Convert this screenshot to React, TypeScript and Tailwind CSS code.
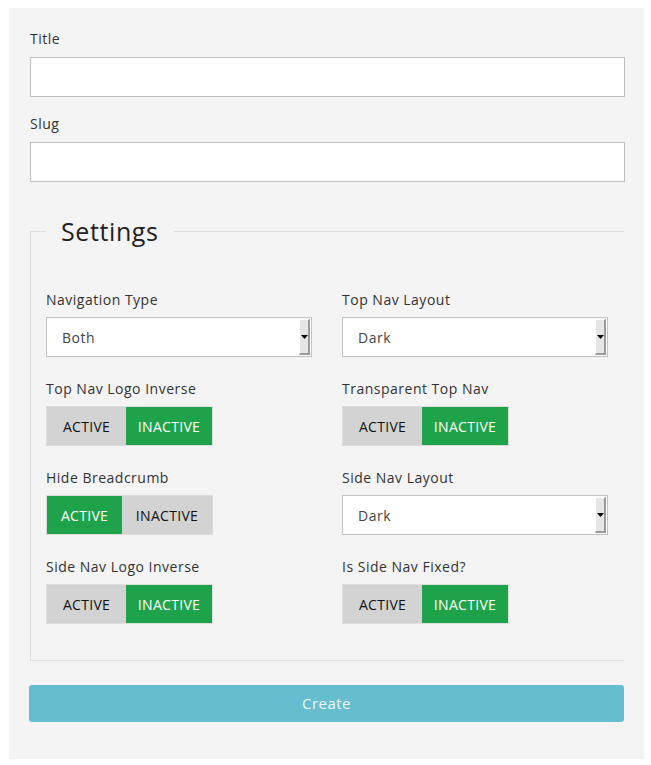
import { useState } from "react";

type ToggleProps = { value: boolean; onChange: (v: boolean) => void };

function Toggle({ value, onChange }: ToggleProps) {
  // selected side is green, the other one stays gray
  return (
    <div className="flex h-[40px] w-[167px] border border-[#dcdcdc] text-[14px]">
      <button
        type="button"
        onClick={() => onChange(true)}
        className={`flex items-center justify-center uppercase tracking-[0.3px] ${
          value ? "w-[75px] bg-[#1fa34a] text-white" : "w-[79px] bg-[#d3d3d3] text-[#111]"
        }`}
      >
        Active
      </button>
      <button
        type="button"
        onClick={() => onChange(false)}
        className={`flex flex-1 items-center justify-center uppercase tracking-[0.3px] ${
          !value ? "bg-[#1fa34a] text-white" : "bg-[#d3d3d3] text-[#111]"
        }`}
      >
        Inactive
      </button>
    </div>
  );
}

function FakeSelect({ value }: { value: string }) {
  return (
    <div className="flex h-[40px] w-[266px] items-stretch border border-[#c2c2c2] bg-white">
      <span className="flex flex-1 items-center pl-[15px] text-[14px] text-[#444]">{value}</span>
      <span className="my-[1px] mr-[1px] flex w-[11px] items-center justify-center border-l border-t border-l-white border-t-white border-r-2 border-b-2 border-r-[#9a9a9a] border-b-[#9a9a9a] bg-[#e6e6e6]">
        <svg width="7" height="4" viewBox="0 0 7 4">
          <path d="M0 0 L7 0 L3.5 4 Z" fill="#000" />
        </svg>
      </span>
    </div>
  );
}

function Field({ label, children }: { label: string; children: React.ReactNode }) {
  return (
    <div>
      <div className="mb-[7px] text-[14px] leading-[21px] text-[#333]">{label}</div>
      {children}
    </div>
  );
}

export default function App() {
  const [logoInverse, setLogoInverse] = useState(false);
  const [transparent, setTransparent] = useState(false);
  const [hideCrumb, setHideCrumb] = useState(true);
  const [sideLogo, setSideLogo] = useState(false);
  const [sideFixed, setSideFixed] = useState(false);

  return (
    <div className="min-h-screen bg-white pl-[9px] pt-[8px] font-['Open_Sans',sans-serif] tracking-[0.5px]">
      <div className="w-[635px] bg-[#f4f4f4] pl-[21px] pr-[19px] pt-[20px] pb-[37px]">
        <label className="block text-[14px] leading-[21px] text-[#333]">Title</label>
        <input className="mt-[8px] block h-[40px] w-full border border-[#bdbdbd] bg-white px-3 outline-none" />

        <label className="mt-[16px] block text-[14px] leading-[21px] text-[#333]">Slug</label>
        <input className="mt-[8px] block h-[40px] w-full border border-[#bdbdbd] bg-white px-3 outline-none" />

        <fieldset className="mt-[32px] w-[594px] border-l border-t border-b border-[#dedede] pl-[15px] pb-[36px]">
          <legend className="px-[15px] text-[25px] leading-[34px] tracking-[0.6px] text-[#222]">Settings</legend>

          <div className="mt-[41px] grid grid-cols-[266px_266px] gap-x-[30px] gap-y-[21px]">
            <Field label="Navigation Type">
              <FakeSelect value="Both" />
            </Field>
            <Field label="Top Nav Layout">
              <FakeSelect value="Dark" />
            </Field>
            <Field label="Top Nav Logo Inverse">
              <Toggle value={logoInverse} onChange={setLogoInverse} />
            </Field>
            <Field label="Transparent Top Nav">
              <Toggle value={transparent} onChange={setTransparent} />
            </Field>
            <Field label="Hide Breadcrumb">
              <Toggle value={hideCrumb} onChange={setHideCrumb} />
            </Field>
            <Field label="Side Nav Layout">
              <FakeSelect value="Dark" />
            </Field>
            <Field label="Side Nav Logo Inverse">
              <Toggle value={sideLogo} onChange={setSideLogo} />
            </Field>
            <Field label="Is Side Nav Fixed?">
              <Toggle value={sideFixed} onChange={setSideFixed} />
            </Field>
          </div>
        </fieldset>

        <button
          type="button"
          className="-ml-px mt-[24px] block h-[37px] w-[595px] rounded-[3px] bg-[#65bdcf] text-[15px] tracking-[0.5px] text-[#eef8fa]"
        >
          Create
        </button>
      </div>
    </div>
  );
}
